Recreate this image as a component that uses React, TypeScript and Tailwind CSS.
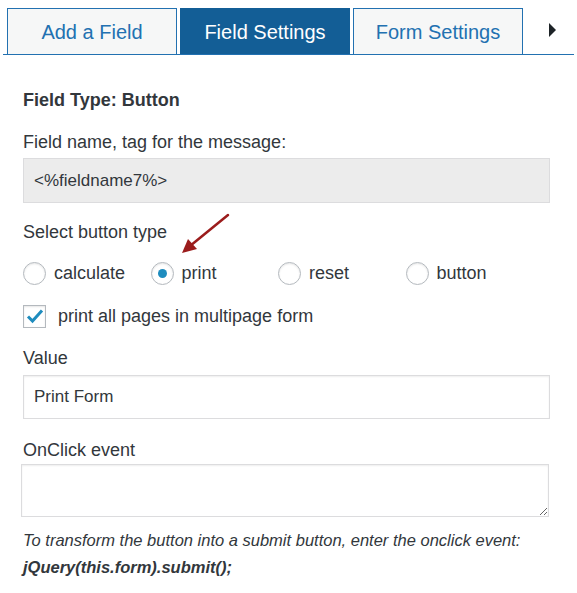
import React from "react";

const tabs = [
  { label: "Add a Field", active: false },
  { label: "Field Settings", active: true },
  { label: "Form Settings", active: false },
];

const tipos = ["calculate", "print", "reset", "button"];

export default function App() {
  return (
    <div className="w-[577px] h-[593px] bg-white text-[#32373c] font-['Liberation_Sans',Arial,sans-serif] overflow-hidden">
      {/* pestañas */}
      <div className="px-[3px] pt-[8px]">
        <div className="flex items-stretch gap-[3px] pl-[4px] border-b border-[#2271b1] h-[47px]">
          {tabs.map((t) => (
            <div
              key={t.label}
              className={
                t.active
                  ? "w-[170px] flex items-center justify-center bg-[#135e96] border border-b-0 border-[#135e96] text-white text-[20px]"
                  : "w-[170px] flex items-center justify-center bg-[#f6f7f7] border border-b-0 border-[#2271b1] text-[#2271b1] text-[20px]"
              }
            >
              {t.label}
            </div>
          ))}
          <div className="flex-1 flex items-center justify-center pl-[4px] pb-[2px]">
            <svg width="7" height="14" viewBox="0 0 7 14">
              <path d="M0 0 L7 7 L0 14 Z" fill="#1d2327" />
            </svg>
          </div>
        </div>
      </div>

      <div className="pl-[23px] pr-[27px]">
        <div className="mt-[33px] h-[24px] leading-[24px] text-[18px] font-bold">Field Type: Button</div>

        <div className="mt-[18px] h-[24px] leading-[24px] text-[18px]">Field name, tag for the message:</div>
        <input
          readOnly
          value="<%fieldname7%>"
          className="mt-[4px] w-full h-[45px] px-[10px] bg-[#ececec] border border-[#dcdcde] text-[17px] text-[#32373c] outline-none"
        />

        <div className="mt-[17px] h-[24px] leading-[24px] text-[18px]">Select button type</div>

        <div className="relative mt-[17px] h-[24px] flex items-center">
          {tipos.map((t) => (
            <label key={t} className="w-[127.5px] flex items-center gap-[8px] text-[18px]">
              <span className="w-[23px] h-[23px] rounded-full border border-[#b4b9be] bg-white shadow-[inset_0_1px_2px_rgba(0,0,0,0.1)] flex items-center justify-center">
                {t === "print" && <span className="w-[9px] h-[9px] rounded-full bg-[#1e8cbe]" />}
              </span>
              {t}
            </label>
          ))}
          <svg className="absolute left-[153px] top-[-50px]" width="60" height="50" viewBox="0 0 60 50">
            <line x1="52" y1="4" x2="14" y2="35" stroke="#9b1c1c" strokeWidth="2.5" strokeLinecap="round" />
            <path d="M6 42 L12 28 L21 38 Z" fill="#9b1c1c" />
          </svg>
        </div>

        <div className="mt-[19px] h-[24px] flex items-center gap-[12px] text-[18px]">
          <span className="w-[23px] h-[23px] border border-[#b4b9be] bg-white shadow-[inset_0_1px_2px_rgba(0,0,0,0.1)] flex items-center justify-center">
            <svg width="18" height="16" viewBox="0 0 18 16">
              <path d="M2 8.5 L6.5 13 L16 2.5" fill="none" stroke="#1e8cbe" strokeWidth="3" />
            </svg>
          </span>
          print all pages in multipage form
        </div>

        <div className="mt-[18px] h-[24px] leading-[24px] text-[18px]">Value</div>
        <input
          readOnly
          value="Print Form"
          className="mt-[5px] w-full h-[44px] px-[10px] bg-white border border-[#dcdcde] shadow-[inset_0_1px_2px_rgba(0,0,0,0.07)] text-[17px] text-[#32373c] outline-none"
        />

        <div className="mt-[19px] h-[24px] leading-[24px] text-[18px]">OnClick event</div>
        <textarea
          readOnly
          className="block mt-[2px] -ml-[2px] w-[528px] h-[53px] bg-white border border-[#dcdcde] shadow-[inset_0_1px_2px_rgba(0,0,0,0.07)] outline-none"
        />

        <div className="mt-[11px] h-[24px] leading-[24px] text-[16.5px] italic">
          To transform the button into a submit button, enter the onclick event:
        </div>
        <div className="mt-[3px] h-[24px] leading-[24px] text-[16.5px] italic font-bold">jQuery(this.form).submit();</div>
      </div>
    </div>
  );
}
